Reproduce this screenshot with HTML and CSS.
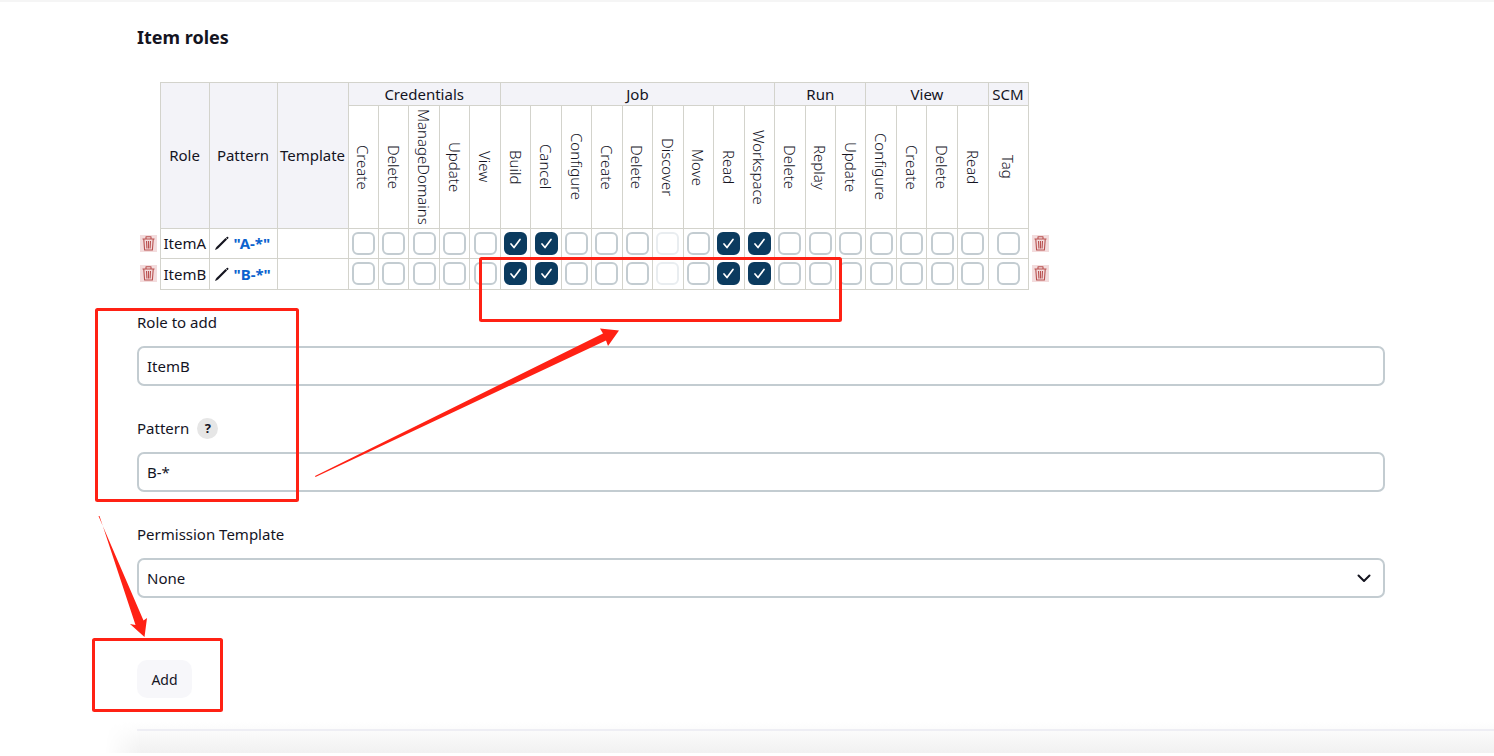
FILE: index.html
```html
<!DOCTYPE html>
<html lang="en">
<head>
  <meta charset="UTF-8" />
  <meta name="viewport" content="width=device-width, initial-scale=1" />
  <title>Manage Roles</title>
  <link rel="stylesheet" href="styles.css">
</head>
<body>

<svg class="symbols" aria-hidden="true">
  <symbol id="trash" viewBox="0 0 17 17">
    <path d="M2.500 4h12M6 3.800V1.800h5v2M3.800 4.500l.8 10.500h7.800l.8-10.500M6.500 6l.4 7.500M8.500 6v7.500M10.500 6l-.4 7.500" fill="none" stroke="#b9504f" stroke-width="1.100" stroke-linejoin="round"/>
  </symbol>
  <symbol id="pencil" viewBox="0 0 16 16">
    <path d="M3 13L12.300 3.700" fill="none" stroke="#14141f" stroke-width="2.200"/>
    <path d="M1 15l1.200-3 1.800 1.800zM12 2.800l.8-.8q.9-.6 1.400 0t0 1.400L13.400 4.200z" fill="#14141f"/>
  </symbol>
</svg>

<main class="page">
  <h2 class="title">Item roles</h2>

  <table class="roles">
    <colgroup>
      <col class="col-icon"><col class="col-role"><col class="col-pattern"><col class="col-template">
      <col span="21">
      <col class="col-scm"><col class="col-icon">
    </colgroup>
    <thead>
      <tr class="groups" id="groupRow">
        <td class="side" rowspan="2"></td>
        <th rowspan="2">Role</th>
        <th rowspan="2">Pattern</th>
        <th rowspan="2">Template</th>
      </tr>
      <tr class="permissions" id="permissionRow"></tr>
    </thead>
    <tbody id="roleRows"></tbody>
  </table>

  <form class="form" onsubmit="return false">
    <div class="field">
      <div class="label-row"><label for="roleName">Role to add</label></div>
      <input class="input" type="text" id="roleName" value="ItemB">
    </div>
    <div class="field">
      <div class="label-row">
        <label for="pattern">Pattern</label>
        <button class="help" type="button" aria-label="Help for pattern">?</button>
      </div>
      <input class="input" type="text" id="pattern" value="B-*">
    </div>
    <div class="field">
      <div class="label-row"><label for="template">Permission Template</label></div>
      <div class="select-wrap">
        <select class="input" id="template"><option>None</option></select>
        <svg class="chevron" width="14" height="9" viewBox="0 0 14 9"><path d="M1.500 1.500L7 7l5.500-5.500" fill="none" stroke="#14141f" stroke-width="2" stroke-linecap="round" stroke-linejoin="round"/></svg>
      </div>
    </div>
    <button class="add" type="button">Add</button>
  </form>
</main>

<footer class="bottom-bar"><hr></footer>

<!-- callouts drawn over the page -->
<svg class="callouts" width="860" height="730" viewBox="0 0 860 730" aria-hidden="true">
  <g fill="none" stroke="#ff2114" stroke-width="3">
    <rect x="480.500" y="258.500" width="360" height="62" rx="1"/>
    <rect x="96.500" y="309.500" width="201" height="191" rx="1"/>
    <rect x="93.500" y="639.500" width="128" height="71" rx="1"/>
  </g>
  <g fill="#ff2114">
    <path d="M315 476L603 333.500L600 328.500L619 330.500L608 346L606 340.500L315.500 477z"/>
    <path d="M98.500 516L143.500 620.500L147 618L144.500 637L130 624L135.500 625L99.500 516z"/>
  </g>
</svg>

<script src="roles.js"></script>
</body>
</html>
```

FILE: styles.css
```css
* {
  box-sizing: border-box;
}
body {
  margin: 0;
  border-top: 2px solid #f5f5f5;
  background-color: #fff;
  color: #14141f;
  font-family: "Noto Sans", "Segoe UI", sans-serif;
  font-size: 15px;
  position: relative;
}
.symbols {
  display: none;
}
.page {
  padding: 23px 109px 0 137px;
}
.title {
  margin: 0 0 33px;
  font-size: 18px;
  line-height: 24px;
}

/* permission matrix */
.roles {
  width: 914px;
  table-layout: fixed;
  border-collapse: collapse;
}
.col-icon {
  width: 23px;
}
.col-role {
  width: 49px;
}
.col-pattern {
  width: 68px;
}
.col-template {
  width: 71px;
}
.col-scm {
  width: 40px;
}
.roles th,
.roles td {
  padding: 0;
  border: 1px solid #d3d3cc;
  font-weight: 400;
  line-height: 20px;
  text-align: center;
  white-space: nowrap;
}
.groups th {
  height: 23px;
  background-color: #f3f3f8;
}
.roles .groups th[rowspan] {
  padding-bottom: 2px;
}
.roles .permissions th {
  height: 123px;
  font-weight: 300;
}
.permissions span {
  display: inline-block;
  writing-mode: vertical-rl;
  line-height: 20px;
  vertical-align: middle;
}
.roles tbody tr {
  height: 30px;
}
.roles tbody tr:last-child {
  height: 31px;
}
.roles tbody td {
  padding-bottom: 1px;
}
.roles .name {
  padding-left: 3px;
  text-align: left;
}
.roles .side {
  border-top: none;
  border-bottom: none;
}
.roles .side:first-child {
  border-left: none;
}
.roles .side:last-child {
  border-right: none;
}
.delete {
  display: block;
  width: 17px;
  height: 17px;
  margin-left: 3px;
  padding: 0;
  border: none;
  background-color: #f3dcdd;
}
.delete svg {
  display: block;
}
.pattern {
  display: flex;
  align-items: center;
  gap: 4px;
  padding-left: 4px;
}
.pattern a {
  color: #0b63ce;
  font-weight: 700;
  text-decoration: none;
}
.roles input {
  appearance: none;
  display: block;
  width: 23px;
  height: 23px;
  margin: 0 auto;
  border: 2px solid #c3ccd1;
  border-radius: 6px;
  background-color: #fff;
}
.roles input:disabled {
  border-color: #e9edf0;
}
.roles input:checked {
  border-color: #0b3b5f;
  background: #0b3b5f url("data:image/svg+xml,%3Csvg xmlns='http://www.w3.org/2000/svg' viewBox='0 0 19 19'%3E%3Cpath d='M5 10l3 3.500 6-8' fill='none' stroke='white' stroke-width='1.700' stroke-linecap='round' stroke-linejoin='round'/%3E%3C/svg%3E") center / 19px no-repeat;
}

/* add role form */
.form {
  margin-top: 20px;
}
.field {
  margin-bottom: 30px;
}
.label-row {
  display: flex;
  align-items: center;
  gap: 8px;
  height: 24px;
  margin-bottom: 12px;
}
.help {
  width: 21px;
  height: 21px;
  padding: 0;
  border: none;
  border-radius: 50%;
  background-color: #e6e6e6;
  color: #14141f;
  font: 700 13px/21px "Noto Sans", sans-serif;
}
.input {
  appearance: none;
  display: block;
  width: 100%;
  height: 40px;
  padding: 0 8px;
  border: 2px solid #c3ccd1;
  border-radius: 7px;
  background-color: #fff;
  color: #14141f;
  font: inherit;
}
.select-wrap {
  position: relative;
}
.chevron {
  position: absolute;
  top: 16px;
  right: 14px;
  pointer-events: none;
}
.add {
  width: 55px;
  height: 38px;
  margin-top: 32px;
  border: none;
  border-radius: 10px;
  background-color: #f7f7fa;
  color: #14141f;
  font: inherit;
  font-size: 14px;
}
.bottom-bar {
  height: 31px;
  margin: 24px 0 3px 105px;
  padding: 7px 0 0 32px;
  background: linear-gradient(#fff, #f1f1f1);
  -webkit-mask-image: linear-gradient(to right, transparent, #000 36px);
  mask-image: linear-gradient(to right, transparent, #000 36px);
}
.bottom-bar hr {
  height: 2px;
  margin: 0;
  border: none;
  background-color: #eeeef4;
}
.callouts {
  position: absolute;
  top: -2px;
  left: 0;
  pointer-events: none;
}
```

FILE: roles.js
```js
const groups = {
  Credentials: ["Create", "Delete", "ManageDomains", "Update", "View"],
  Job: ["Build", "Cancel", "Configure", "Create", "Delete", "Discover", "Move", "Read", "Workspace"],
  Run: ["Delete", "Replay", "Update"],
  View: ["Configure", "Create", "Delete", "Read"],
  SCM: ["Tag"]
};
const roles = [
  { name: "ItemA", pattern: "A-*" },
  { name: "ItemB", pattern: "B-*" }
];
const granted = ["Job/Build", "Job/Cancel", "Job/Read", "Job/Workspace"];
const implied = ["Job/Discover"];

let groupCells = "";
let permissionCells = "";
for (const group in groups) {
  groupCells += `<th colspan="${groups[group].length}">${group}</th>`;
  groups[group].forEach(p => {
    permissionCells += `<th><span>${p}</span></th>`;
  });
}
document.getElementById("groupRow").innerHTML += groupCells + '<td class="side" rowspan="2"></td>';
document.getElementById("permissionRow").innerHTML = permissionCells;

function deleteCell(role) {
  return `<td class="side"><button class="delete" type="button" aria-label="Delete ${role.name}"><svg width="17" height="17"><use href="#trash"/></svg></button></td>`;
}

document.getElementById("roleRows").innerHTML = roles.map(role => {
  let cells = "";
  for (const group in groups) {
    groups[group].forEach(p => {
      const id = group + "/" + p;
      const checked = granted.includes(id) ? " checked" : "";
      const disabled = implied.includes(id) ? " disabled" : "";
      cells += `<td><input type="checkbox" aria-label="${role.name} ${id}"${checked}${disabled}></td>`;
    });
  }
  return `<tr>${deleteCell(role)}<td class="name">${role.name}</td>
    <td><div class="pattern"><svg width="16" height="16"><use href="#pencil"/></svg><a href="#">"${role.pattern}"</a></div></td>
    <td></td>${cells}${deleteCell(role)}</tr>`;
}).join("");
```
